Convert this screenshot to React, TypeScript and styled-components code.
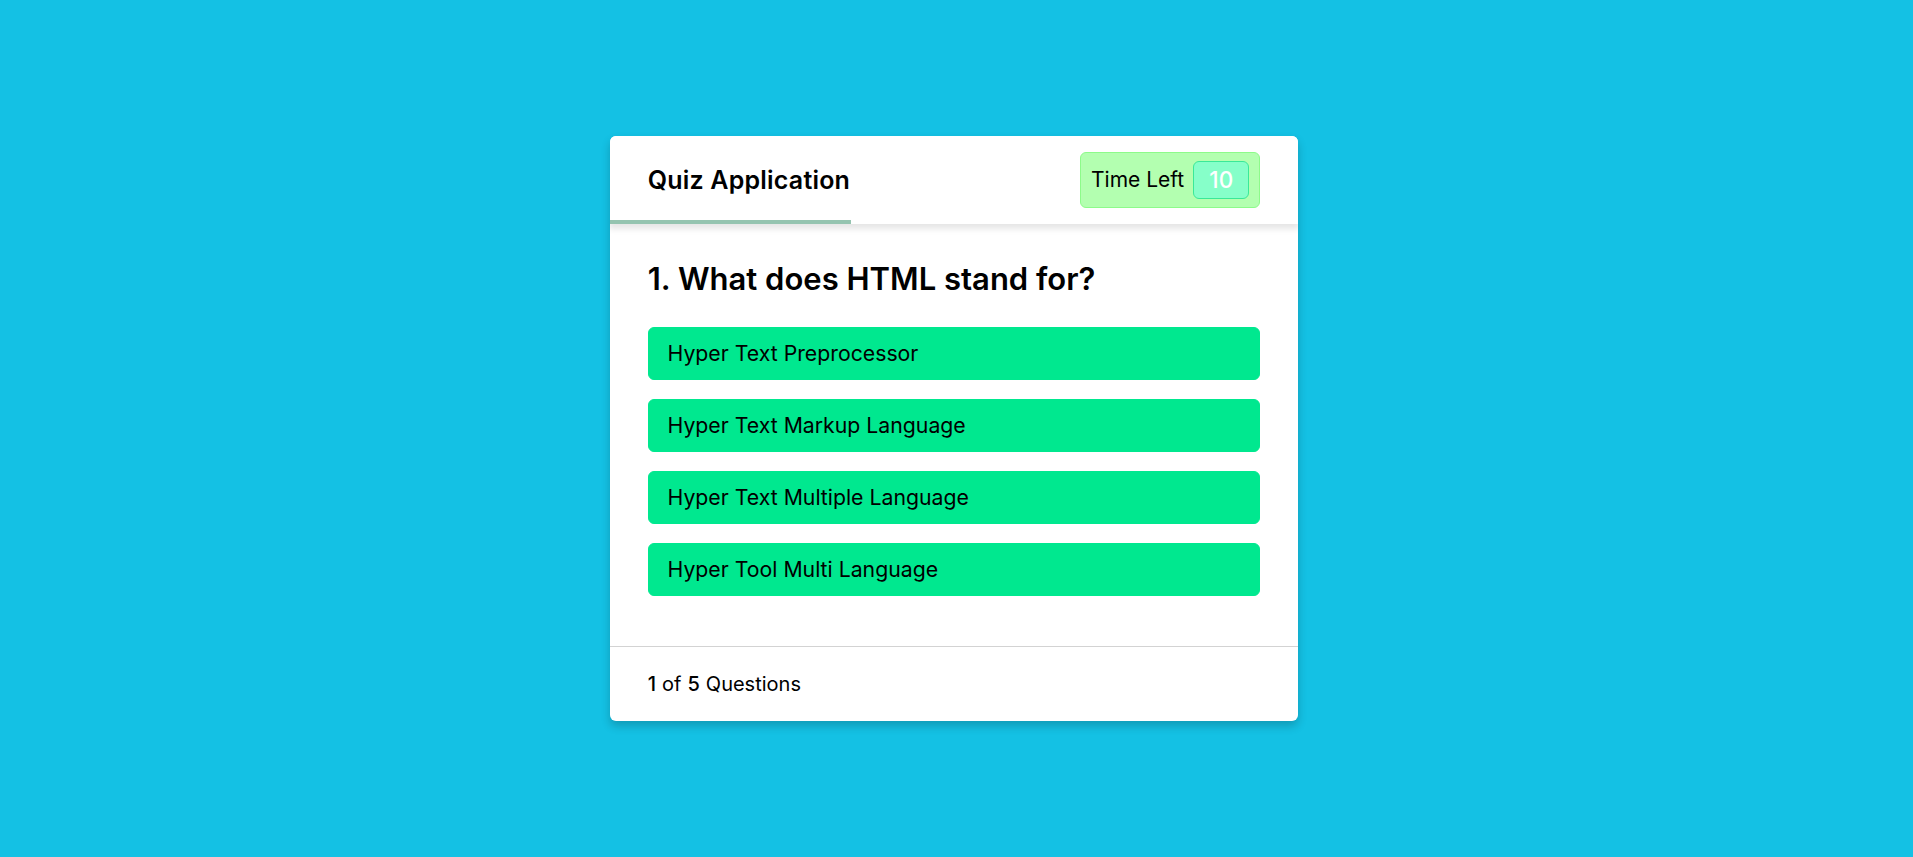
import React from "react";
import styled, { createGlobalStyle } from "styled-components";

const GlobalStyle = createGlobalStyle`
  * { margin: 0; padding: 0; box-sizing: border-box; }
  html, body { height: 100%; }
  body {
    background: #14c1e4;
    font-family: "Inter", "Noto Sans", sans-serif;
    color: #000;
  }
  #root { height: 100%; }
`;

const Page = styled.div`
  height: 100%;
  padding-right: 5px;
  display: flex;
  align-items: center;
  justify-content: center;
`;

const Card = styled.div`
  width: 687.5px;
  background: #fff;
  border-radius: 6px;
  box-shadow: 0 5px 10px 0 rgba(0, 0, 0, 0.2);
  overflow: hidden;
`;

const Header = styled.header`
  position: relative;
  z-index: 2;
  height: 87.5px;
  padding: 0 37.5px;
  display: flex;
  align-items: center;
  justify-content: space-between;
  background: #fff;
  box-shadow: 0 4px 6px 1px rgba(0, 0, 0, 0.1);
`;

const Title = styled.div`
  font-size: 25px;
  font-weight: 600;
  letter-spacing: 0.2px;
`;

const TimeLine = styled.div`
  position: absolute;
  left: 0;
  bottom: 0;
  height: 4px;
  background: #95c4b0;
`;

const Timer = styled.div`
  height: 56px;
  padding: 0 10px;
  display: flex;
  align-items: center;
  gap: 9px;
  background: #b3ffb0;
  border: 1.25px solid #8dfb8a;
  border-radius: 6px;
`;

const TimerLabel = styled.span`
  font-size: 21px;
  font-weight: 400;
`;

const TimerSec = styled.span`
  height: 37.5px;
  width: 56px;
  line-height: 35px;
  text-align: center;
  font-size: 22.5px;
  font-weight: 500;
  color: #fff;
  background: #86ffc9;
  border: 1.25px solid #3ae998;
  border-radius: 6px;
`;

const Section = styled.section`
  padding: 31px 37.5px 25px 37.5px;
`;

const Question = styled.div`
  font-size: 31px;
  font-weight: 600;
  line-height: 47px;
`;

const OptionList = styled.div`
  padding: 25px 0;
  display: flex;
  flex-direction: column;
  gap: 18.75px;
`;

const Option = styled.div`
  background: #00e88f;
  border: 1.25px solid #00e88f;
  border-radius: 6px;
  padding: 10px 18.75px;
  font-size: 21.25px;
  line-height: 31.25px;
`;

const Footer = styled.footer`
  height: 75px;
  padding: 0 37.5px;
  display: flex;
  align-items: center;
  border-top: 1.25px solid #d3d3d3;
  font-size: 20px;
`;

const Num = styled.b<{ $first?: boolean }>`
  font-weight: 500;
  padding: 0 ${(p) => (p.$first ? "6px 0 0" : "6px")};
`;

const options = [
  "Hyper Text Preprocessor",
  "Hyper Text Markup Language",
  "Hyper Text Multiple Language",
  "Hyper Tool Multi Language",
];

export default function App() {
  return (
    <>
      <GlobalStyle />
      <Page>
        <Card>
          <Header>
            <Title>Quiz Application</Title>
            <Timer>
              <TimerLabel>Time Left</TimerLabel>
              <TimerSec>10</TimerSec>
            </Timer>
            <TimeLine style={{ width: "241px" }} />
          </Header>
          <Section>
            <Question>1. What does HTML stand for?</Question>
            <OptionList>
              {options.map((o) => (
                <Option key={o}>{o}</Option>
              ))}
            </OptionList>
          </Section>
          <Footer>
            <span>
              <Num $first>1</Num>of<Num>5</Num>Questions
            </span>
          </Footer>
        </Card>
      </Page>
    </>
  );
}
